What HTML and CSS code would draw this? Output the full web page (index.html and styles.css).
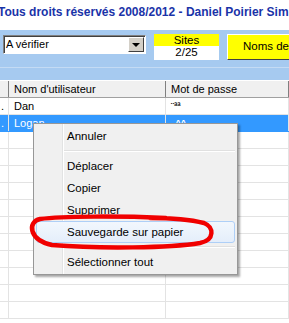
FILE: index.html
```html
<!DOCTYPE html>
<html>
<head>
    <title>Mots de passe</title>
    <link rel="stylesheet" href="styles.css">
</head>
<body>
    <div class="title">Tous droits réservés 2008/2012 - Daniel Poirier Sim</div>

    <!-- Toolbar -->
    <div class="toolbar">
        <div class="combo">
            <span class="combo-text">A vérifier</span>
            <span class="combo-btn"><span class="arrow"></span></span>
        </div>
        <div class="sites">
            <div class="sites-label">Sites</div>
            <div class="sites-count">2/25</div>
        </div>
        <div class="yellow-btn">Noms des</div>
    </div>
    <div class="band"></div>

    <!-- Grid -->
    <div class="grid">
        <div class="row head">
            <div class="cell"></div>
            <div class="cell">Nom d'utilisateur</div>
            <div class="cell">Mot de passe</div>
        </div>
        <div class="row">
            <div class="cell">.</div>
            <div class="cell">Dan</div>
            <div class="cell pw">¨ªª</div>
        </div>
        <div class="row selected">
            <div class="cell">.</div>
            <div class="cell">Logan</div>
            <div class="cell pw">„^^</div>
        </div>
        <div class="row"><div class="cell"></div><div class="cell"></div><div class="cell"></div></div>
        <div class="row"><div class="cell"></div><div class="cell"></div><div class="cell"></div></div>
        <div class="row"><div class="cell"></div><div class="cell"></div><div class="cell"></div></div>
        <div class="row"><div class="cell"></div><div class="cell"></div><div class="cell"></div></div>
        <div class="row"><div class="cell"></div><div class="cell"></div><div class="cell"></div></div>
        <div class="row"><div class="cell"></div><div class="cell"></div><div class="cell"></div></div>
        <div class="row"><div class="cell"></div><div class="cell"></div><div class="cell"></div></div>
        <div class="row"><div class="cell"></div><div class="cell"></div><div class="cell"></div></div>
        <div class="row"><div class="cell"></div><div class="cell"></div><div class="cell"></div></div>
        <div class="row"><div class="cell"></div><div class="cell"></div><div class="cell"></div></div>
        <div class="row"><div class="cell"></div><div class="cell"></div><div class="cell"></div></div>
    </div>

    <!-- Context menu -->
    <div class="menu">
        <div class="item">Annuler</div>
        <div class="sep"></div>
        <div class="item">Déplacer</div>
        <div class="item">Copier</div>
        <div class="item">Supprimer</div>
        <div class="item hover">Sauvegarde sur papier</div>
        <div class="sep"></div>
        <div class="item">Sélectionner tout</div>
    </div>

    <!-- Red hand-drawn circle -->
    <svg class="scribble" width="289" height="323" viewBox="0 0 289 323">
        <path d="M166 218 C120 216 62 216 40 219 C27 222 29 240 52 245 C100 249 170 248 200 243 C215 240 214 227 204 223 C188 219 168 218 150 218"
              fill="none" stroke="#f00000" stroke-width="4.5" stroke-linecap="round"/>
    </svg>
</body>
</html>
```

FILE: styles.css
```css
body {
    margin: 0;
    width: 289px;
    height: 323px;
    overflow: hidden;
    background: #fff;
    font-family: "Liberation Sans", Arial, sans-serif;
    font-size: 11px;
    position: relative;
}
.title {
    height: 30px;
    box-sizing: border-box;
    padding-top: 5px;
    margin-left: -2px;
    white-space: nowrap;
    overflow: hidden;
    font-size: 12px;
    font-weight: bold;
    line-height: 14px;
    color: #1a33a8;
}
.toolbar {
    height: 37px;
    box-sizing: border-box;
    background: #a6caf0;
    display: flex;
    align-items: flex-start;
    gap: 8px;
    padding: 4px 0 0 3px;
    white-space: nowrap;
    overflow: hidden;
}
.toolbar > div {
    flex-shrink: 0;
}
.combo {
    margin-top: 1px;
    width: 143px;
    height: 19px;
    box-sizing: border-box;
    background: #fff;
    border: 1px solid;
    border-color: #808080 #fff #fff #808080;
    box-shadow: inset 1px 1px 0 #404040;
    display: flex;
    align-items: center;
    justify-content: space-between;
    padding: 0 1px 0 2px;
}
.combo-text {
    line-height: 15px;
}
.combo-btn {
    width: 16px;
    height: 15px;
    box-sizing: border-box;
    background: #d4d0c8;
    border: 1px solid;
    border-color: #fff #404040 #404040 #fff;
    display: flex;
    align-items: center;
    justify-content: center;
}
.arrow {
    width: 0;
    height: 0;
    border-left: 4px solid transparent;
    border-right: 4px solid transparent;
    border-top: 4px solid #000;
}
.sites {
    width: 65px;
    text-align: center;
    line-height: 13px;
    font-size: 11.5px;
}
.sites-label {
    background: #ffff00;
    height: 12px;
}
.sites-count {
    background: #fff;
    height: 14px;
}
.yellow-btn {
    width: 62px;
    height: 26px;
    box-sizing: border-box;
    background: #ffff00;
    border: 1px solid;
    border-right: 0;
    border-color: #fff #404040 #404040 #fff;
    padding: 4px 0 0 15px;
    font-size: 11.5px;
    line-height: 14px;
}
.band {
    height: 12px;
    background: #a6caf0;
    border-top: 1px solid #c4dbf4;
}
.row {
    display: grid;
    grid-template-columns: 9px 157px 1fr;
    height: 17px;
    box-sizing: border-box;
    border-bottom: 1px solid #e3e3e3;
    line-height: 16px;
    color: #000;
}
.cell {
    border-right: 1px solid #e3e3e3;
    padding-left: 5px;
    white-space: nowrap;
    overflow: hidden;
}
.cell:first-child {
    padding-left: 1px;
}
.row.head {
    height: 18px;
    background: #f0f0f0;
    border-bottom: 1px solid #a0a0a0;
    border-top: 1px solid #fff;
}
.row.head .cell {
    border-right-color: #808080;
}
.row.selected {
    background: #3399ff;
    color: #fff;
    border-bottom-color: #3399ff;
}
.pw {
    font-size: 9px;
    font-weight: bold;
}
.menu {
    position: absolute;
    left: 33px;
    top: 123px;
    width: 205px;
    box-sizing: border-box;
    padding: 1px 2px;
    background: #f0f0f0 linear-gradient(to right, transparent 28px, #e2e3e3 28px, #e2e3e3 29px, #fff 29px, #fff 30px, transparent 30px);
    border: 1px solid #979797;
    box-shadow: 2px 2px 2px rgba(0, 0, 0, 0.35);
    font-family: "Liberation Sans", Arial, sans-serif;
    font-size: 11.5px;
}
.item {
    height: 22px;
    line-height: 22px;
    padding-left: 31px;
    box-sizing: border-box;
    color: #000;
}
.item.hover {
    border: 1px solid #aecff7;
    border-radius: 3px;
    background: linear-gradient(#f2f7fd, #e4eefb);
    line-height: 20px;
    padding-left: 30px;
}
.sep {
    height: 8px;
    margin-left: 28px;
    background: linear-gradient(transparent 3px, #e0e0e0 3px, #e0e0e0 4px, #fff 4px, #fff 5px, transparent 5px);
}
.scribble {
    position: absolute;
    left: 0;
    top: 0;
    pointer-events: none;
}
```
